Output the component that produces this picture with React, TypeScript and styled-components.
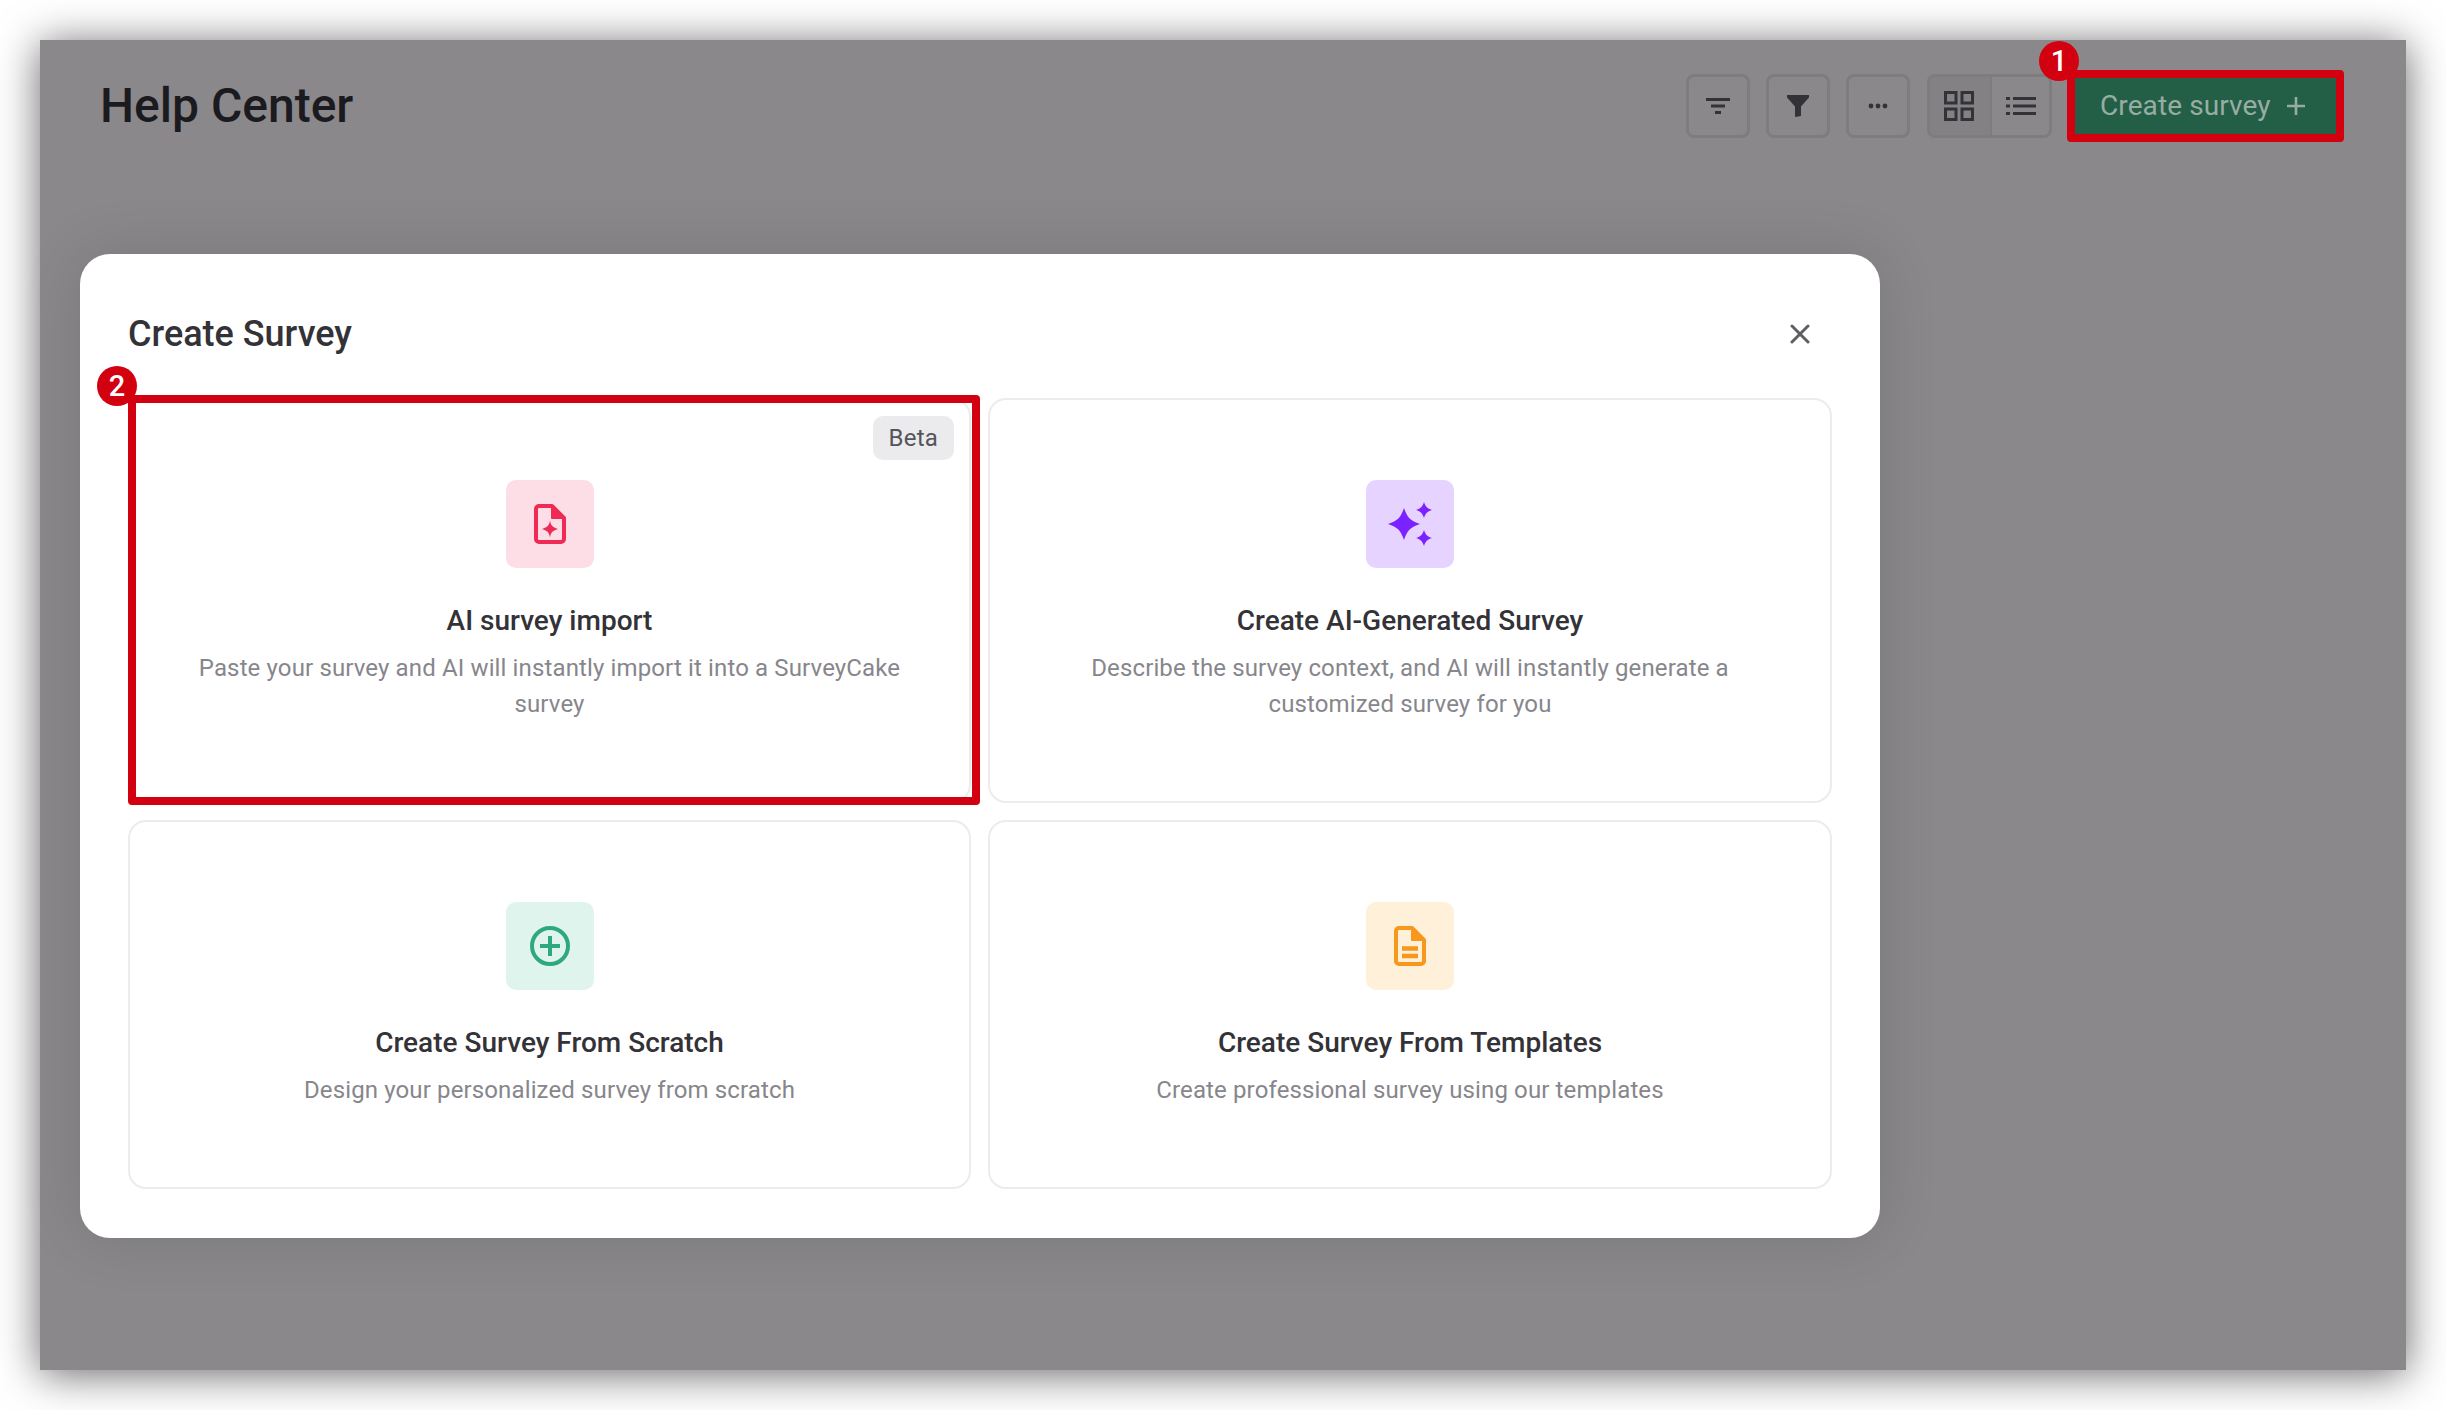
import React from "react";
import styled, { createGlobalStyle } from "styled-components";

const Global = createGlobalStyle`
  html, body { margin: 0; padding: 0; background: #fff; }
  * { box-sizing: border-box; }
  body { font-family: Roboto, "Liberation Sans", sans-serif; }
`;

const Page = styled.div`
  width: 2446px;
  height: 1410px;
  padding: 40px;
  background: #fff;
  overflow: hidden;
`;

const Window = styled.div`
  position: relative;
  width: 2366px;
  height: 1330px;
  background: #8a888b;
  box-shadow: 0 4px 40px rgba(0, 0, 0, 0.6);
`;

const TopBar = styled.header`
  display: flex;
  align-items: center;
  justify-content: space-between;
  height: 131px;
  padding: 0 69px 0 60px;
`;

const PageTitle = styled.h1`
  margin: 0;
  font-size: 48px;
  font-weight: 500;
  line-height: 56px;
  color: #1b1a1e;
`;

const Tools = styled.div`
  display: flex;
  align-items: center;
  gap: 16px;
`;

const ToolButton = styled.button`
  display: flex;
  align-items: center;
  justify-content: center;
  width: 64px;
  height: 64px;
  padding: 0;
  background: transparent;
  border: 3px solid #7e7c80;
  border-radius: 8px;
  color: #333236;
`;

const Segmented = styled.div`
  display: flex;
  height: 64px;
  margin-left: 1px;
  border: 3px solid #7e7c80;
  border-radius: 8px;
  overflow: hidden;
`;

const Segment = styled.button<{ $active?: boolean }>`
  display: flex;
  align-items: center;
  justify-content: center;
  width: 60px;
  padding: ${(p) => (p.$active ? "0 3px 0 0" : "0")};
  border: 0;
  background: ${(p) => (p.$active ? "#838184" : "transparent")};
  & + & { width: 59px; border-left: 2px solid #7e7c80; }
  color: #333236;
`;

const Marked = styled.div`
  position: relative;
  margin-left: 7px;
`;

const CreateButton = styled.button`
  display: flex;
  align-items: center;
  gap: 15px;
  width: 262px;
  height: 56px;
  padding: 0 25px;
  border: 0;
  background: #235e47;
  color: #98ada2;
  font: 400 28px Roboto, sans-serif;
  letter-spacing: 0.1px;
  white-space: nowrap;
`;

const ButtonRing = styled.span`
  position: absolute;
  inset: -8px -7px -8px -8px;
  border: 8px solid #d3000f;
  border-radius: 4px;
`;

const Badge = styled.span`
  position: absolute;
  z-index: 3;
  display: flex;
  align-items: center;
  justify-content: center;
  width: 40px;
  height: 40px;
  border-radius: 50%;
  background: #d3000f;
  color: #fff;
  font: 500 29px Roboto, sans-serif;
`;

const BadgeOne = styled(Badge)`
  left: -36px;
  top: -37px;
`;

const BadgeTwo = styled(Badge)`
  left: -33px;
  top: -34px;
`;

const Modal = styled.section`
  position: absolute;
  left: 40px;
  top: 214px;
  width: 1800px;
  height: 984px;
  padding: 0 48px;
  background: #fff;
  border-radius: 30px;
  box-shadow: 0 0 60px rgba(0, 0, 0, 0.13);
`;

const ModalHead = styled.div`
  display: flex;
  align-items: center;
  justify-content: space-between;
  height: 144px;
  padding-top: 16px;
`;

const ModalTitle = styled.h2`
  margin: 0;
  font-size: 36px;
  font-weight: 500;
  color: #333237;
`;

const CloseButton = styled.button`
  display: flex;
  padding: 0;
  margin-right: 22px;
  border: 0;
  background: transparent;
  color: #5f5e63;
`;

const CardGrid = styled.div`
  display: grid;
  grid-template-columns: 843px 844px;
  grid-template-rows: 405px 369px;
  gap: 17px;
`;

const Card = styled.article`
  position: relative;
  display: flex;
  flex-direction: column;
  align-items: center;
  padding: 80px 64px 0;
  background: #fff;
  border: 2px solid #ecebee;
  border-radius: 18px;
  text-align: center;
`;

const IconBox = styled.div<{ $bg: string }>`
  display: flex;
  align-items: center;
  justify-content: center;
  width: 88px;
  height: 88px;
  border-radius: 10px;
  background: ${(p) => p.$bg};
`;

const CardTitle = styled.h3`
  margin: 35px 0 0;
  font-size: 28px;
  font-weight: 500;
  line-height: 36px;
  color: #333237;
`;

const CardText = styled.p`
  margin: 11px 0 0;
  font-size: 24px;
  letter-spacing: 0.13px;
  font-weight: 400;
  line-height: 36px;
  color: #87868c;
`;

const BetaTag = styled.span`
  position: absolute;
  top: 16px;
  right: 15px;
  padding: 0 16px;
  height: 44px;
  line-height: 44px;
  border-radius: 10px;
  background: #ebebed;
  color: #55545a;
  font-size: 24px;
  letter-spacing: 0.2px;
`;

const CardRing = styled.span`
  position: absolute;
  left: -2px;
  top: -5px;
  right: -11px;
  bottom: -4px;
  border: 8px solid #d3000f;
  border-radius: 4px;
  pointer-events: none;
`;

const FilterLines = () => (
  <svg width="24" height="16" viewBox="0 0 24 16" fill="currentColor">
    <rect y="0" width="24" height="3" />
    <rect x="5" y="6.5" width="14" height="3" />
    <rect x="9" y="13" width="6" height="3" />
  </svg>
);
const Funnel = () => (
  <svg width="22" height="22" viewBox="0 0 22 22" fill="currentColor">
    <path d="M0 0h22v2.500L14 11.500V21l-6 1V11.500L0 2.500z" />
  </svg>
);
const Dots = () => (
  <svg width="20" height="6" viewBox="0 0 20 6" fill="currentColor">
    <circle cx="3" cy="3" r="2.4" />
    <circle cx="10" cy="3" r="2.4" />
    <circle cx="17" cy="3" r="2.4" />
  </svg>
);
const GridIcon = () => (
  <svg width="30" height="30" viewBox="0 0 30 30" fill="none" stroke="currentColor" strokeWidth="3">
    <rect x="1.5" y="1.5" width="10.5" height="10.5" />
    <rect x="18" y="1.5" width="10.5" height="10.5" />
    <rect x="1.5" y="18" width="10.5" height="10.5" />
    <rect x="18" y="18" width="10.5" height="10.5" />
  </svg>
);
const ListIcon = () => (
  <svg width="30" height="18" viewBox="0 0 30 18" fill="currentColor">
    <rect y="0" width="4" height="3" />
    <rect x="7" y="0" width="23" height="3" />
    <rect y="7.5" width="4" height="3" />
    <rect x="7" y="7.5" width="23" height="3" />
    <rect y="15" width="4" height="3" />
    <rect x="7" y="15" width="23" height="3" />
  </svg>
);
const Plus = () => (
  <svg width="20" height="20" viewBox="0 0 20 20" stroke="currentColor" strokeWidth="2.6">
    <path d="M10 1v18M1 10h18" />
  </svg>
);
const Close = () => (
  <svg width="20" height="20" viewBox="0 0 20 20" stroke="currentColor" strokeWidth="3" strokeLinecap="round">
    <path d="M2 2l16 16M18 2L2 18" />
  </svg>
);
const FileSpark = () => (
  <svg width="32" height="40" viewBox="0 0 32 40" fill="none">
    <path d="M5 2h13l12 12v21a3 3 0 0 1-3 3H5a3 3 0 0 1-3-3V5a3 3 0 0 1 3-3z" stroke="#ee2a55" strokeWidth="4" strokeLinejoin="round" />
    <path d="M18 2l12 12H18z" fill="#ee2a55" stroke="#ee2a55" strokeWidth="2" strokeLinejoin="round" />
    <path d="M16 16.500c.8 4.800 2.200 6.700 8 8.500-5.800 1.800-7.200 3.700-8 8.500-.8-4.800-2.200-6.700-8-8.500 5.800-1.800 7.200-3.700 8-8.500z" fill="#ee2a55" />
  </svg>
);
const star = (cx: number, cy: number, r: number) => {
  const k = r * 0.2;
  return `M${cx} ${cy - r}C${cx + k} ${cy - k * 2} ${cx + k * 2} ${cy - k} ${cx + r} ${cy}C${cx + k * 2} ${cy + k} ${cx + k} ${cy + k * 2} ${cx} ${cy + r}C${cx - k} ${cy + k * 2} ${cx - k * 2} ${cy + k} ${cx - r} ${cy}C${cx - k * 2} ${cy - k} ${cx - k} ${cy - k * 2} ${cx} ${cy - r}z`;
};
const Sparkles = () => (
  <svg width="88" height="88" viewBox="0 0 88 88" fill="#7a22ff">
    <path d={star(38, 44, 16)} />
    <path d={star(58, 30, 8)} />
    <path d={star(58, 58, 8)} />
  </svg>
);
const PlusCircle = () => (
  <svg width="40" height="40" viewBox="0 0 40 40" fill="none" stroke="#2fa87f" strokeWidth="4">
    <circle cx="20" cy="20" r="18" />
    <path d="M20 10v20M10 20h20" />
  </svg>
);
const DocLines = () => (
  <svg width="32" height="40" viewBox="0 0 32 40" fill="none">
    <path d="M5 2h13l12 12v21a3 3 0 0 1-3 3H5a3 3 0 0 1-3-3V5a3 3 0 0 1 3-3z" stroke="#f7971c" strokeWidth="4" strokeLinejoin="round" />
    <path d="M18 2l12 12H18z" fill="#f7971c" stroke="#f7971c" strokeWidth="2" strokeLinejoin="round" />
    <path d="M8 22.500h16M8 30h16" stroke="#f7971c" strokeWidth="4.500" />
  </svg>
);

export default function App() {
  return (
    <>
      <Global />
      <Page>
        <Window>
          <TopBar>
            <PageTitle>Help Center</PageTitle>
            <Tools>
              <ToolButton><FilterLines /></ToolButton>
              <ToolButton><Funnel /></ToolButton>
              <ToolButton><Dots /></ToolButton>
              <Segmented>
                <Segment $active><GridIcon /></Segment>
                <Segment><ListIcon /></Segment>
              </Segmented>
              <Marked>
                <BadgeOne>1</BadgeOne>
                <CreateButton>Create survey <Plus /></CreateButton>
                <ButtonRing />
              </Marked>
            </Tools>
          </TopBar>
          <Modal>
            <ModalHead>
              <ModalTitle>Create Survey</ModalTitle>
              <CloseButton><Close /></CloseButton>
            </ModalHead>
            <CardGrid>
              <Card>
                <BadgeTwo>2</BadgeTwo>
                <CardRing />
                <BetaTag>Beta</BetaTag>
                <IconBox $bg="#fddde6"><FileSpark /></IconBox>
                <CardTitle>AI survey import</CardTitle>
                <CardText>Paste your survey and AI will instantly import it into a SurveyCake survey</CardText>
              </Card>
              <Card>
                <IconBox $bg="#e6d3ff"><Sparkles /></IconBox>
                <CardTitle>Create AI-Generated Survey</CardTitle>
                <CardText>Describe the survey context, and AI will instantly generate a customized survey for you</CardText>
              </Card>
              <Card>
                <IconBox $bg="#e0f4ee"><PlusCircle /></IconBox>
                <CardTitle>Create Survey From Scratch</CardTitle>
                <CardText>Design your personalized survey from scratch</CardText>
              </Card>
              <Card>
                <IconBox $bg="#fff0da"><DocLines /></IconBox>
                <CardTitle>Create Survey From Templates</CardTitle>
                <CardText>Create professional survey using our templates</CardText>
              </Card>
            </CardGrid>
          </Modal>
        </Window>
      </Page>
    </>
  );
}
